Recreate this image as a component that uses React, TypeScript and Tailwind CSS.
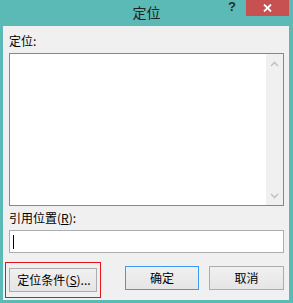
import React from "react";

const font = { fontFamily: '"Noto Sans CJK SC", "Noto Sans", sans-serif' };

function Chevron({ up }: { up?: boolean }) {
  return (
    <svg width="9" height="6" viewBox="0 0 9 6" className="block">
      <path
        d={up ? "M1 5 L4.5 1.5 L8 5" : "M1 1 L4.5 4.5 L8 1"}
        fill="none"
        stroke="#c4c4c4"
        strokeWidth="1.6"
      />
    </svg>
  );
}

export default function App() {
  return (
    <div
      className="w-[293px] h-[303px] bg-[#5bbab5] flex flex-col overflow-hidden"
      style={font}
    >
      {/* title bar */}
      <div className="relative h-[26px] shrink-0 flex items-center justify-center">
        <span className="text-[14px] leading-[16px] text-[#222] mb-[2px]">定位</span>
        <span
          className="absolute left-[228px] top-[0px] text-[13px] font-bold leading-[13px] text-[#2b2b2b]"
          style={{ fontFamily: '"Liberation Sans", sans-serif' }}
        >
          ?
        </span>
        <div className="absolute left-[246px] top-0 w-[43px] h-[16px] bg-[#c75050] flex items-center justify-center">
          <svg width="9" height="8" viewBox="0 0 9 8">
            <path d="M1 0.5 L8 7.5 M8 0.5 L1 7.5" stroke="#fff" strokeWidth="1.8" />
          </svg>
        </div>
      </div>

      {/* client area */}
      <div className="ml-[3px] mr-[4px] mb-[3px] flex-1 bg-[#f0f0f0] pl-[6px] pr-[5px] pt-[7px] pb-[10px] flex flex-col">
        <div className="text-[12px] leading-[16px] text-black">定位:</div>
        <div className="mt-[4px] h-[153px] border border-[#828790] bg-white flex justify-end">
          <div className="w-[17px] bg-[#f0f0f0] flex flex-col items-center justify-between pt-[7px] pb-[6px]">
            <Chevron up />
            <Chevron />
          </div>
        </div>
        <div className="mt-[4px] text-[12px] leading-[16px] text-black">
          引用位置(<span className="underline">R</span>):
        </div>
        <div className="mt-[4px] h-[23px] border border-[#abadb3] bg-white flex items-center pl-[3px]">
          <div className="w-[1px] h-[14px] bg-black" />
        </div>
        <div className="mt-[13px] h-[24px] flex">
          <div className="relative w-[88px] h-full">
            <div className="absolute -left-[4px] -top-[4px] -right-[4px] -bottom-[8px] border-[1.5px] border-[#e8141b]" />
            <button className="relative w-full h-full border border-[#acacac] bg-gradient-to-b from-[#f0f0f0] to-[#e5e5e5] text-[12px] leading-[16px] text-black pl-[2px]">
              定位条件(<span className="underline">S</span>)...
            </button>
          </div>
          <button className="ml-[28px] w-[74px] h-full border border-[#3c9bf0] bg-gradient-to-b from-[#f0f0f0] to-[#e5e5e5] text-[12px] leading-[16px] text-black">
            确定
          </button>
          <button className="ml-[10px] w-[75px] h-full border border-[#acacac] bg-gradient-to-b from-[#f0f0f0] to-[#e5e5e5] text-[12px] leading-[16px] text-black">
            取消
          </button>
        </div>
      </div>
    </div>
  );
}
